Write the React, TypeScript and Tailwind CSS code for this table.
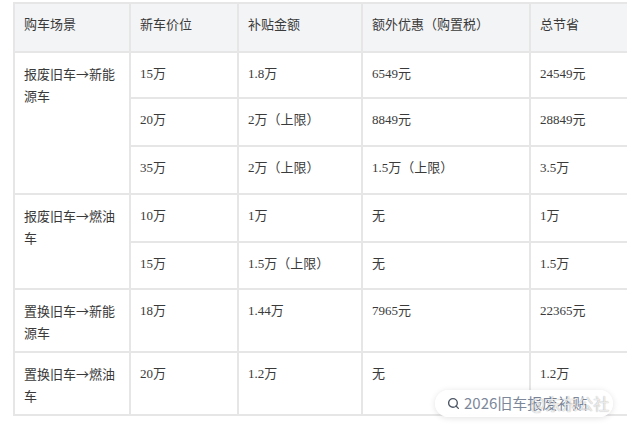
import { Search } from "lucide-react";

type Row = {
  scene?: { text: [string, string, string]; span: number };
  price: string;
  subsidy: string;
  extra: string;
  total: string;
  h: string;
};

const rows: Row[] = [
  { scene: { text: ["报废旧车", "新能", "源车"], span: 3 }, price: "15万", subsidy: "1.8万", extra: "6549元", total: "24549元", h: "h-[46px]" },
  { price: "20万", subsidy: "2万（上限）", extra: "8849元", total: "28849元", h: "h-[48px]" },
  { price: "35万", subsidy: "2万（上限）", extra: "1.5万（上限）", total: "3.5万", h: "h-[48px]" },
  { scene: { text: ["报废旧车", "燃油", "车"], span: 2 }, price: "10万", subsidy: "1万", extra: "无", total: "1万", h: "h-[48px]" },
  { price: "15万", subsidy: "1.5万（上限）", extra: "无", total: "1.5万", h: "h-[47px]" },
  { scene: { text: ["置换旧车", "新能", "源车"], span: 1 }, price: "18万", subsidy: "1.44万", extra: "7965元", total: "22365元", h: "h-[63px]" },
  { scene: { text: ["置换旧车", "燃油", "车"], span: 1 }, price: "20万", subsidy: "1.2万", extra: "无", total: "1.2万", h: "h-[63px]" },
];

const cell = "border-2 border-[#e6e6e6] align-top pl-[9px] pt-[10px] leading-[22px]";
const last = "border-2 border-r-0 border-[#e6e6e6] align-top pl-[9px] pt-[10px] leading-[22px]";

export default function App() {
  return (
    <div className="relative w-[640px] h-[424px] bg-white overflow-hidden font-['Liberation_Serif','Noto_Sans_CJK_SC',serif] text-[13px] text-[#3a3a3a]">
      <div className="pt-[2px] pl-[13px]">
        <table className="table-fixed border-collapse w-[613px]">
          <colgroup>
            <col className="w-[116px]" />
            <col className="w-[108px]" />
            <col className="w-[124px]" />
            <col className="w-[168px]" />
            <col className="w-[97px]" />
          </colgroup>
          <thead>
            <tr className="h-[49px] bg-[#f3f4f6]">
              <th className={`${cell} font-normal text-left`}>购车场景</th>
              <th className={`${cell} font-normal text-left`}>新车价位</th>
              <th className={`${cell} font-normal text-left`}>补贴金额</th>
              <th className={`${cell} font-normal text-left`}>额外优惠（购置税）</th>
              <th className={`${last} font-normal text-left`}>总节省</th>
            </tr>
          </thead>
          <tbody>
            {rows.map((r, i) => (
              <tr key={i} className={r.h}>
                {r.scene && (
                  <td rowSpan={r.scene.span} className={cell}>
                    <div>
                      {r.scene.text[0]}
                      <span className="font-['Noto_Sans_CJK_SC',sans-serif]">→</span>
                      {r.scene.text[1]}
                    </div>
                    <div>{r.scene.text[2]}</div>
                  </td>
                )}
                <td className={cell}>{r.price}</td>
                <td className={cell}>{r.subsidy}</td>
                <td className={cell}>{r.extra}</td>
                <td className={last}>{r.total}</td>
              </tr>
            ))}
          </tbody>
        </table>
      </div>

      {/* search pill + watermark */}
      <div className="absolute left-[435px] top-[390px] w-[178px] h-[27px] rounded-full bg-white/95 shadow-[0_1px_6px_rgba(0,0,0,0.12)] flex items-center pl-[12px] gap-[4px] font-['Noto_Sans_CJK_SC',sans-serif] text-[15px] text-[#7d879a] whitespace-nowrap overflow-hidden">
        <Search className="w-[13px] h-[13px] text-[#4b5563]" strokeWidth={2.5} />
        <span>2026旧车报废补贴</span>
      </div>
      <div className="absolute left-[530px] top-[391px] font-['Noto_Sans_CJK_SC',sans-serif] text-[16px] text-white/80 [text-shadow:0_0_1px_rgba(0,0,0,0.45)] whitespace-nowrap">
        @东东公社
      </div>
    </div>
  );
}
